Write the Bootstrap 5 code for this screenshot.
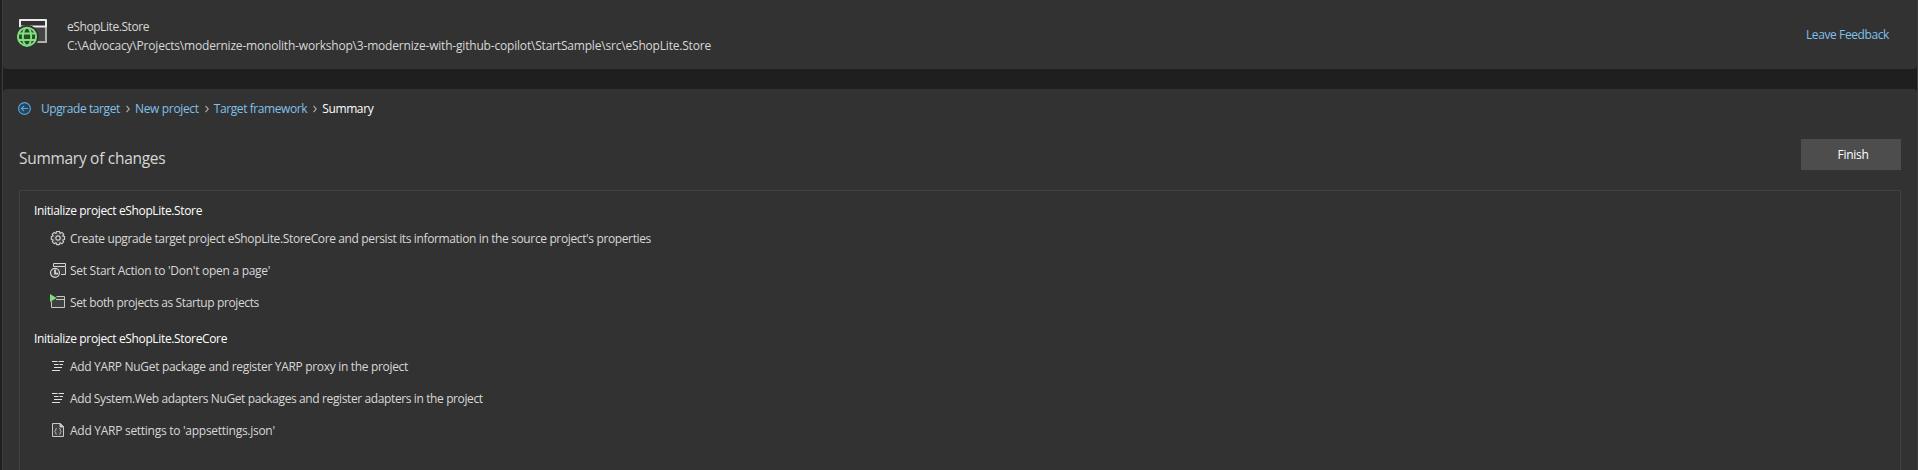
<!DOCTYPE html>
<html lang="en">
<head>
<meta charset="utf-8">
<meta name="viewport" content="width=device-width, initial-scale=1">
<title>eShopLite.Store - Upgrade</title>
<link href="https://cdn.jsdelivr.net/npm/bootstrap@5.3.0/dist/css/bootstrap.min.css" rel="stylesheet">
<style>
body{font:12px/19px "Open Sans","Noto Sans",sans-serif;letter-spacing:-.37px;background:#1f1f1f;color:#d8d8d8;height:100vh;overflow:hidden;white-space:nowrap}
.shell{margin-left:2px;height:100vh;border:solid #3d3d3d;border-width:0 1px}
.pane{background:#323232}
.pane-top{height:69px;border-radius:0 0 4px 4px;padding:0 28px 0 14px}
.pane-main{margin-top:20px;border-radius:4px 4px 0 0;padding:0 16px}
.app-icon{margin-top:-3px}
.proj{margin:3px 0 0 18px}
.path-text{letter-spacing:-.192px}
.proj-name{letter-spacing:-.428px}
a{color:#80c0ea;text-decoration:none}
.feedback{letter-spacing:-.4px}
.crumbs{height:19px;margin-top:10px}
.crumbs a{letter-spacing:-.42px}
.crumbs a.short{letter-spacing:-.34px}
.crumbs .back{margin:0 10px 0 -1px}
.crumbs .sep{margin:1px 5.3px 0 5.8px}
.title-row{height:72px}
.title-text{font-size:15.5px;line-height:24px;letter-spacing:-.29px;margin-top:28px}
.finish,.finish:hover{width:100px;height:31px;margin-top:21px;padding:0 0 0 4px;background:#4d4d4d;color:#fff;border:0;border-radius:0;font-size:12px;letter-spacing:-.28px}
.changes{border:1px solid #424242;border-bottom:0;padding:7px 14px 0}
.group-head{height:24px;color:#fff;letter-spacing:-.354px}
.group-head + ul{margin-bottom:8px}
.step{height:32px;padding-left:16px}
.step svg{width:16px;height:16px;margin-right:4px;overflow:visible}
.w1{letter-spacing:-.275px}.w2{letter-spacing:-.318px}.w3{letter-spacing:-.385px}
</style>
</head>
<body>
<div class="shell d-flex flex-column">
  <header class="pane pane-top d-flex align-items-center flex-shrink-0">
    <svg width="32" height="30" viewBox="0 0 32 30" fill="none" class="app-icon flex-shrink-0">
      <path d="M3 8h25v16H3z" fill="#444"/>
      <path d="M29 8v16h-9" stroke="#b0b0b0" stroke-width="2"/>
      <path d="M3 8.5V2h26v6.5z" stroke="#ececec" stroke-width="2" stroke-linejoin="round"/>
      <circle cx="10" cy="18.7" r="11.8" fill="#323232"/>
      <g stroke="#80e080" stroke-width="1.9"><circle cx="10" cy="18.7" r="9.1" fill="#2b4a2c"/><ellipse cx="10" cy="18.7" rx="4.2" ry="9.1"/><path d="M1.5 15.5h17M1.5 22h17"/></g>
    </svg>
    <div class="proj">
      <div class="proj-name">eShopLite.Store</div>
      <div class="path-text">C:\Advocacy\Projects\modernize-monolith-workshop\3-modernize-with-github-copilot\StartSample\src\eShopLite.Store</div>
    </div>
    <a href="#" class="feedback ms-auto">Leave Feedback</a>
  </header>

  <main class="pane pane-main d-flex flex-column flex-grow-1">
    <nav class="crumbs d-flex align-items-center flex-shrink-0" aria-label="Steps">
      <svg class="back" width="13" height="13" viewBox="0 0 13 13" fill="none" stroke="#4ba8ea" stroke-width="1.15"><circle cx="6.5" cy="6.5" r="5.9" fill="#2d4252"/><path d="M10 6.5H3.4M6 3.9 3.4 6.5 6 9.1"/></svg>
      <a href="#">Upgrade target</a>
      <svg class="sep" width="4" height="8" viewBox="0 0 4 8" fill="none" stroke="#a8a8a8" stroke-width="1.2"><path d="M.5.8 3.3 4 .5 7.2"/></svg>
      <a href="#" class="short">New project</a>
      <svg class="sep" width="4" height="8" viewBox="0 0 4 8" fill="none" stroke="#a8a8a8" stroke-width="1.2"><path d="M.5.8 3.3 4 .5 7.2"/></svg>
      <a href="#">Target framework</a>
      <svg class="sep" width="4" height="8" viewBox="0 0 4 8" fill="none" stroke="#a8a8a8" stroke-width="1.2"><path d="M.5.8 3.3 4 .5 7.2"/></svg>
      <span class="text-white">Summary</span>
    </nav>

    <div class="title-row d-flex justify-content-between align-items-start flex-shrink-0">
      <div class="title-text">Summary of changes</div>
      <button type="button" class="btn finish">Finish</button>
    </div>

    <section class="changes flex-grow-1">
      <div class="group-head d-flex align-items-center">Initialize project eShopLite.Store</div>
      <ul class="list-unstyled">
        <li class="step d-flex align-items-center">
          <svg viewBox="0 0 16 16" fill="none" stroke="#d0d0d0" stroke-linejoin="round"><path d="M6.5 1.5h3l.5 2 1.8-1.1 2 2L12.600 6l2 .5v3l-2 .5 1.100 1.800-2 2L10 12.600l-.5 2h-3l-.5-2-1.800 1.100-2-2L3.300 10l-2-.5v-3l2-.5L2.200 4.400l2-2L6 3.500z" fill="#444" stroke-width="1.100"/><circle cx="8" cy="8" r="2.200" fill="#323232" stroke-width="1.200"/></svg>
          Create upgrade target project eShopLite.StoreCore and persist its information in the source project's properties
        </li>
        <li class="step d-flex align-items-center">
          <svg viewBox="0 0 16 16" fill="none" stroke="#d4d4d4"><path d="M3.500 2.500h12v10h-4" fill="#404040" stroke="none"/><path d="M3.500 4.500v-3h12v3zM15.500 5v7.500H11"/><circle cx="5" cy="10.800" r="5.800" fill="#323232" stroke="none"/><circle cx="5" cy="10.800" r="4.500" fill="#404040" stroke-width="1.200"/><path d="M5 7.600v4h3" stroke-width="1.800"/></svg>
          <span class="w1">Set Start Action to 'Don't open a page'</span>
        </li>
        <li class="step d-flex align-items-center">
          <svg viewBox="0 0 16 16" fill="none" stroke="#c8c8c8"><path d="M1.500 7.500v6h13v-11H6.500M6 5.500h8.500" fill="#404040"/><path d="M0 0v8l6.600-4z" fill="#7be07b" stroke="none"/></svg>
          <span class="w3">Set both projects as Startup projects</span>
        </li>
      </ul>

      <div class="group-head d-flex align-items-center">Initialize project eShopLite.StoreCore</div>
      <ul class="list-unstyled">
        <li class="step d-flex align-items-center">
          <svg viewBox="0 0 16 16" fill="none" stroke="#e0e0e0"><path d="M2 3.500h5.500M8.500 3.500H14M4 6.500h4.500M9.500 6.500H13M4 9.500h8M2 12.500h8"/></svg>
          <span class="w2">Add YARP NuGet package and register YARP proxy in the project</span>
        </li>
        <li class="step d-flex align-items-center">
          <svg viewBox="0 0 16 16" fill="none" stroke="#e0e0e0"><path d="M2 3.500h5.500M8.500 3.500H14M4 6.500h4.500M9.500 6.500H13M4 9.500h8M2 12.500h8"/></svg>
          <span class="w3">Add System.Web adapters NuGet packages and register adapters in the project</span>
        </li>
        <li class="step d-flex align-items-center">
          <svg viewBox="0 0 16 16" fill="none" stroke="#c8c8c8"><path d="M2.500 1.500h8l3 3v10h-11z" fill="#404040"/><path d="M10 1.500v3.500h3.500z" fill="#c8c8c8"/><path d="M6.700 6.500c-1 0-1 .3-1 1v1l-.9.9.9.9v1c0 .7 0 1 1 1M9.300 6.500c1 0 1 .3 1 1v1l.9.9-.9.9v1c0 .7 0 1-1 1"/></svg>
          <span class="w1">Add YARP settings to 'appsettings.json'</span>
        </li>
      </ul>
    </section>
  </main>
</div>
<script src="https://cdn.jsdelivr.net/npm/bootstrap@5.3.0/dist/js/bootstrap.bundle.min.js"></script>
</body>
</html>
